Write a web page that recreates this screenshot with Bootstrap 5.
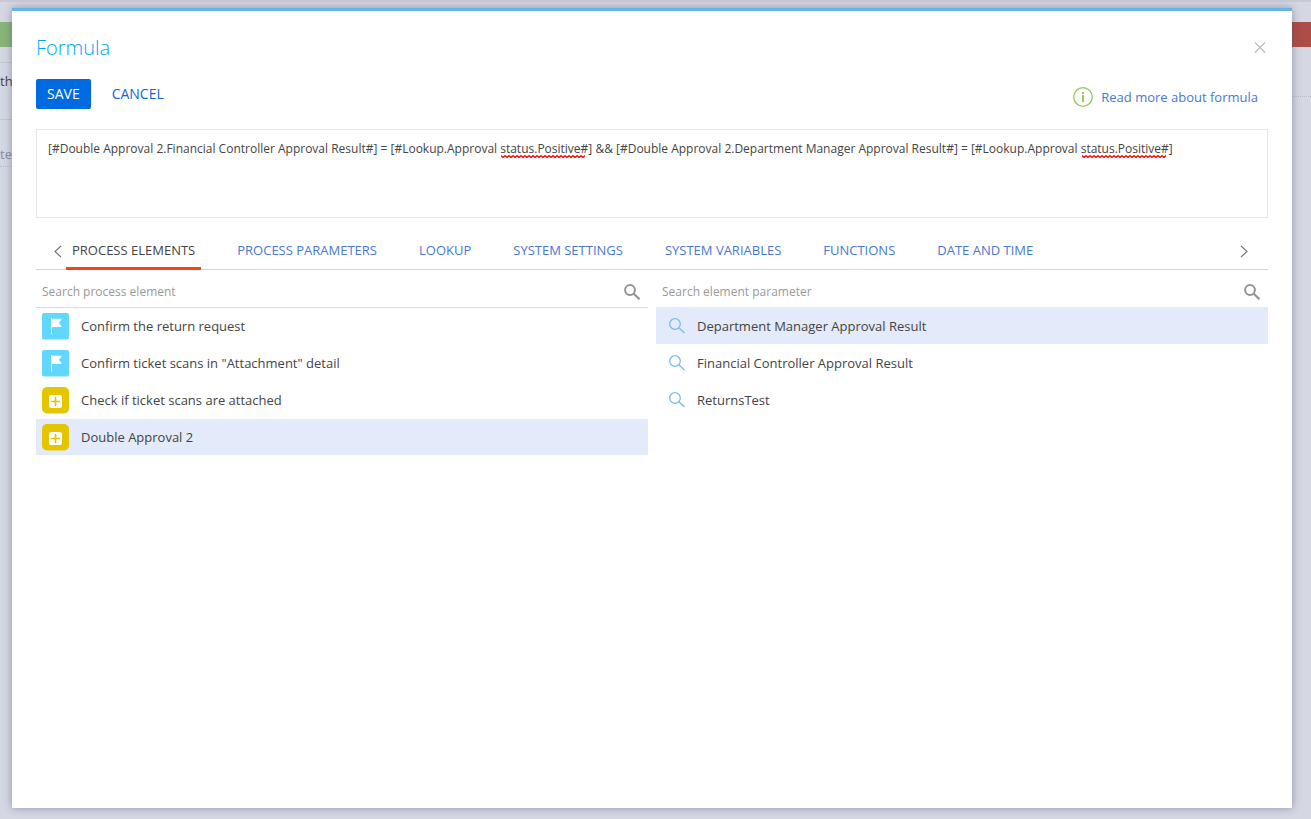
<!DOCTYPE html>
<html lang="en">
<head>
<meta charset="utf-8">
<meta name="viewport" content="width=device-width, initial-scale=1">
<title>Formula</title>
<link rel="stylesheet" href="https://cdn.jsdelivr.net/npm/bootstrap@5.3.0/dist/css/bootstrap.min.css">
<style>
body { font-family: "Open Sans", "Noto Sans", sans-serif; font-size: 13px; line-height: 20px; color: #444; background: #d5d7e2; }
svg { display: block; flex: none; }
a { color: #4a77d4; text-decoration: none; }

/* page under the dialog */
.under-page { inset: 0; z-index: 0; border-top: 2px solid #c9cad6; padding-top: 20px; }
.under-left { width: 12px; white-space: nowrap; }
.under-right { width: 19px; }
.bar { height: 25px; }
.bar-green { background: #8ab377; }
.bar-red { background: #ad4d47; }
.line-top { margin-top: 15px; border-top: 1px solid #c3c5d0; height: 57px; padding-top: 8px; }
.line-mid { border-top: 1px solid #c3c5d0; height: 48px; padding-top: 24px; color: #8b8c96; border-bottom: 1px dotted #b9bbc6; }
.line-right { margin-top: 49px; border-top: 1px dotted #b9bbc6; }

.dialog-panel { margin: 8px 19px 11px 12px; padding: 24px; min-height: calc(100vh - 19px); background: #fff; border-top: 3px solid #63b5e1; box-shadow: 0 0 8px rgba(60,60,110,.45); z-index: 1; }
.dialog-title { font-size: 20px; line-height: 26px; font-weight: 300; color: #00a9ef; margin: 0; }
.close-x { width: 16px; height: 16px; border: 0; padding: 0; background: none; }
.actions { margin-top: 18px; }
.button-row { gap: 10px; }
.btn-dialog { font-size: 14px; line-height: 20px; padding: 5px 11px; border: 0; border-radius: 2px; color: #0b66dc; }
.btn-save { background: #006be0; color: #fff; }
.help-link { gap: 8px; padding-top: 8px; margin-right: 10px; }

.formula-area { margin-top: 20px; }
.formula-input { display: block; width: 100%; height: 89px; padding: 10px 11px; border: 1px solid #e6e6e6; border-radius: 0; font-size: 12px; line-height: 18px; color: #444; resize: none; outline: 0; }
.squiggle { top: 26px; width: 84px; height: 3px; pointer-events: none; background: url("data:image/svg+xml,%3Csvg xmlns='http://www.w3.org/2000/svg' width='4' height='3'%3E%3Cpath d='M0 .5L2 2.5L4 .5' fill='none' stroke='red' stroke-width='1.3'/%3E%3C/svg%3E") repeat-x; }
.squiggle-a { left: 465px; }
.squiggle-b { left: 1046px; }

.tab-strip { margin-top: 14px; height: 38px; border-bottom: 1px solid #d8d8d8; padding: 0 16px; }
.tab-strip .nav { gap: 30px; }
.tab-strip .nav-link { padding: 8px 6px 6px; height: 38px; border: 0; border-bottom: 3px solid transparent; color: #4a77d4; white-space: nowrap; }
.tab-strip .nav-link.active { color: #444; border-bottom-color: #ff4013; }
.arrow-btn { border: 0; padding: 0; background: none; width: 14px; height: 38px; }

.columns { gap: 8px; }
.search-row { height: 38px; padding: 6px 8px 0 6px; border-bottom: 1px solid #dcdcdc; }
.search-row input { flex: 1; min-width: 0; border: 0; padding: 0; font-size: 12px; outline: 0; color: #444; }
.search-row input::placeholder { color: #999; opacity: 1; }
.search-plain { height: 37px; border: 0; }
.item-list { gap: 1px; }
.item { height: 36px; border: 0; padding: 0 6px; gap: 12px; background: none; color: #444; text-align: left; }
.param-list { gap: 0; }
.param-list .item { height: 37px; padding: 0 13px; }
.item.selected { background: #e3eafa; }
</style>
</head>
<body>
<div class="under-page position-absolute d-flex justify-content-between overflow-hidden" aria-hidden="true">
  <div class="under-left">
    <div class="bar bar-green"></div>
    <div class="line-top">the</div>
    <div class="line-mid">te</div>
  </div>
  <div class="under-right">
    <div class="bar bar-red"></div>
    <div class="line-right"></div>
  </div>
</div>

<main class="dialog-panel position-relative" role="dialog" aria-labelledby="title">
  <header class="d-flex justify-content-between align-items-center">
    <h1 class="dialog-title" id="title">Formula</h1>
    <button class="close-x" type="button" aria-label="Close">
      <svg width="16" height="16" fill="none" stroke="#bdbdbd" stroke-width="1.3"><path d="M3 2.500l10 10M13 2.500L3 12.500"/></svg>
    </button>
  </header>

  <div class="actions d-flex justify-content-between align-items-start">
    <div class="button-row d-flex">
      <button class="btn btn-dialog btn-save" type="button">SAVE</button>
      <button class="btn btn-dialog" type="button">CANCEL</button>
    </div>
    <a class="help-link d-flex align-items-center" href="#">
      <svg width="20" height="20" viewBox="0 0 20 20"><circle cx="10" cy="10" r="9.3" fill="none" stroke="#8ecb60" stroke-width="1.3"/><path d="M9 5h2v2H9zM9 8h2v7H9z" fill="#8ecb60"/></svg>
      <span>Read more about formula</span>
    </a>
  </div>

  <div class="formula-area position-relative">
    <textarea class="formula-input" aria-label="Formula" spellcheck="false">[#Double Approval 2.Financial Controller Approval Result#] = [#Lookup.Approval status.Positive#] &amp;&amp; [#Double Approval 2.Department Manager Approval Result#] = [#Lookup.Approval status.Positive#]</textarea>
    <span class="squiggle squiggle-a position-absolute"></span>
    <span class="squiggle squiggle-b position-absolute"></span>
  </div>

  <div class="tab-strip d-flex">
    <button class="arrow-btn" type="button" aria-label="Previous tabs">
      <svg width="14" height="38" fill="none" stroke="#777" stroke-width="1.2"><path d="M9 14l-6 5.500 6 5.500"/></svg>
    </button>
    <nav class="nav flex-nowrap flex-grow-1">
      <a class="nav-link active" href="#" aria-current="page">PROCESS ELEMENTS</a>
      <a class="nav-link" href="#">PROCESS PARAMETERS</a>
      <a class="nav-link" href="#">LOOKUP</a>
      <a class="nav-link" href="#">SYSTEM SETTINGS</a>
      <a class="nav-link" href="#">SYSTEM VARIABLES</a>
      <a class="nav-link" href="#">FUNCTIONS</a>
      <a class="nav-link" href="#">DATE AND TIME</a>
    </nav>
    <button class="arrow-btn" type="button" aria-label="Next tabs">
      <svg width="14" height="38" fill="none" stroke="#777" stroke-width="1.2"><path d="M3 14l6 5.500-6 5.500"/></svg>
    </button>
  </div>

  <svg width="0" height="0" class="position-absolute" aria-hidden="true">
    <symbol id="flag" viewBox="0 0 27 27"><rect width="27" height="26.500" rx="2" fill="#61d7fe"/><path d="M9 5h1v.7h10l-3 4 3 4.300H10V21.500H9z" fill="#fff"/></symbol>
    <symbol id="plus" viewBox="0 0 27 27"><rect width="27" height="26.500" rx="5" fill="#e5c400"/><rect x="7" y="8" width="13" height="13" rx="2.500" fill="#fff"/><path d="M13.500 10v9M9 14.500h9" stroke="#e5c400" stroke-width="1.700"/></symbol>
    <symbol id="glass" viewBox="0 0 16 17"><circle cx="6" cy="7" r="4.900" fill="none" stroke="#939393" stroke-width="2"/><path d="M9.500 10.500l6 5.700" stroke="#939393" stroke-width="2.200"/></symbol>
    <symbol id="lookup" viewBox="0 0 16 17"><circle cx="6" cy="7" r="5.300" fill="none" stroke="#78bfe4" stroke-width="1.300"/><path d="M9.800 10.800l5.700 5.200" stroke="#78bfe4" stroke-width="1.400"/></symbol>
  </svg>

  <div class="columns d-flex">
    <section class="flex-fill w-50">
      <div class="search-row d-flex align-items-center">
        <input type="text" placeholder="Search process element" aria-label="Search process element">
        <svg width="16" height="17"><use href="#glass"/></svg>
      </div>
      <div class="item-list d-flex flex-column">
        <button type="button" class="item d-flex align-items-center"><svg width="27" height="27"><use href="#flag"/></svg>Confirm the return request</button>
        <button type="button" class="item d-flex align-items-center"><svg width="27" height="27"><use href="#flag"/></svg>Confirm ticket scans in "Attachment" detail</button>
        <button type="button" class="item d-flex align-items-center"><svg width="27" height="27"><use href="#plus"/></svg>Check if ticket scans are attached</button>
        <button type="button" class="item selected d-flex align-items-center"><svg width="27" height="27"><use href="#plus"/></svg>Double Approval 2</button>
      </div>
    </section>
    <section class="flex-fill w-50">
      <div class="search-row search-plain d-flex align-items-center">
        <input type="text" placeholder="Search element parameter" aria-label="Search element parameter">
        <svg width="16" height="17"><use href="#glass"/></svg>
      </div>
      <div class="item-list param-list d-flex flex-column">
        <button type="button" class="item selected d-flex align-items-center"><svg width="16" height="17"><use href="#lookup"/></svg>Department Manager Approval Result</button>
        <button type="button" class="item d-flex align-items-center"><svg width="16" height="17"><use href="#lookup"/></svg>Financial Controller Approval Result</button>
        <button type="button" class="item d-flex align-items-center"><svg width="16" height="17"><use href="#lookup"/></svg>ReturnsTest</button>
      </div>
    </section>
  </div>
</main>
<script src="https://cdn.jsdelivr.net/npm/bootstrap@5.3.0/dist/js/bootstrap.bundle.min.js"></script>
</body>
</html>
